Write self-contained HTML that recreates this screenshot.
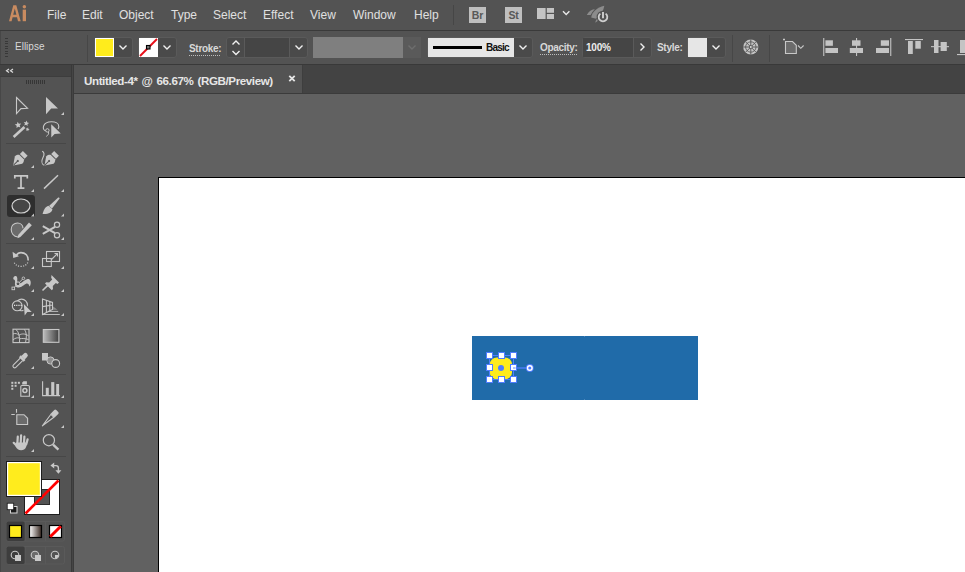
<!DOCTYPE html>
<html><head><meta charset="utf-8">
<style>
*{margin:0;padding:0;box-sizing:border-box}
html,body{width:965px;height:572px;overflow:hidden;background:#535353;font-family:"Liberation Sans",sans-serif;color:#dcdcdc}
.a{position:absolute}
.menu{font-size:12px;color:#e0e0e0;top:8px;line-height:14px}
.lbl{font-size:10px;font-weight:bold;letter-spacing:-0.3px;color:#d6d6d6;line-height:13px}
.box{position:absolute;border:1px solid #5a5a5a;border-radius:3px;background:#4a4a4a}
.dd{position:absolute;background:#474747}
svg{position:absolute;overflow:visible}
</style></head><body>
<!-- menu bar -->
<div class="a" style="left:0;top:0;width:965px;height:30px;background:#535353"></div>
<svg style="left:0;top:0" width="40" height="30"><path d="M9 21.2 L13.3 5.2 L16.3 5.2 L20.7 21.2 L18 21.2 L17 17.3 L12.6 17.3 L11.6 21.2 Z M13.2 14.8 L16.4 14.8 L14.8 8.4 Z" fill="#c98b60" fill-rule="evenodd"/><rect x="22.7" y="9.6" width="3.3" height="11.6" fill="#c98b60"/><circle cx="24.35" cy="6.8" r="1.75" fill="#c98b60"/></svg>
<div class="a menu" style="left:47px">File</div>
<div class="a menu" style="left:82px">Edit</div>
<div class="a menu" style="left:119px">Object</div>
<div class="a menu" style="left:171px">Type</div>
<div class="a menu" style="left:213px">Select</div>
<div class="a menu" style="left:263px">Effect</div>
<div class="a menu" style="left:310px">View</div>
<div class="a menu" style="left:353px">Window</div>
<div class="a menu" style="left:414px">Help</div>
<div class="a" style="left:453px;top:5px;width:1px;height:20px;background:#464646"></div>
<div class="a" style="left:469px;top:7px;width:17px;height:16px;background:#bfbfbf;color:#585858;font-size:10.5px;font-weight:bold;line-height:16px;text-align:center;letter-spacing:-0.2px">Br</div>
<div class="a" style="left:505px;top:7px;width:17px;height:16px;background:#bfbfbf;color:#585858;font-size:10.5px;font-weight:bold;line-height:16px;text-align:center;letter-spacing:-0.2px">St</div>

<!-- workspace + rocket -->
<svg style="left:0;top:0" width="620" height="30">
<rect x="537" y="8" width="8.6" height="11" fill="#c4c4c4"/>
<rect x="546.8" y="8" width="7.2" height="4.8" fill="#c4c4c4"/>
<rect x="546.8" y="14" width="7.2" height="5" fill="#c4c4c4"/>
<path d="M563 11.3 L566.2 14.6 L569.4 11.3" stroke="#e8e8e8" stroke-width="1.4" fill="none"/>
<path d="M591.2 17.6 C592 12 597 7.6 604.3 5.8 C603.6 11 600.6 15.2 596 18.8 Z" fill="#8c8c8c"/>
<path d="M586.8 14.9 C588.5 11.6 591 9.6 594.9 9 C593 11 591.6 13 590.6 15.1 Z" fill="#8c8c8c"/>
<path d="M595.4 22.7 C595.4 20.6 596.4 19 598.4 17.9 L597.6 21 Z" fill="#8c8c8c"/>
<circle cx="603" cy="17.1" r="6.4" fill="#535353"/>
<path d="M600.4 13.6 A4.3 4.3 0 1 0 605.6 13.6" stroke="#cfcfcf" stroke-width="1.8" fill="none"/>
<path d="M603 11.6 L603 18.6" stroke="#535353" stroke-width="3.4"/>
<path d="M603 11.9 L603 18.2" stroke="#cfcfcf" stroke-width="1.9"/>
</svg>
<!-- control bar -->
<div class="a" style="left:0;top:30px;width:965px;height:1px;background:#3a3a3a"></div>
<div class="a" style="left:0;top:31px;width:1px;height:33px;background:#474747"></div>
<div class="a" style="left:0;top:64px;width:965px;height:1px;background:#393939"></div>
<svg style="left:5px;top:38px" width="3" height="20" shape-rendering="crispEdges"><g fill="#383838"><rect x="0" y="0" width="3" height="1"/><rect x="0" y="3" width="3" height="1"/><rect x="0" y="5" width="3" height="1"/><rect x="0" y="8" width="3" height="1"/><rect x="0" y="10" width="3" height="1"/><rect x="0" y="13" width="3" height="1"/><rect x="0" y="15" width="3" height="1"/><rect x="0" y="18" width="3" height="1"/></g></svg>
<div class="a lbl" style="left:15px;top:40px;font-weight:normal;letter-spacing:0;color:#d8d8d8">Ellipse</div>
<div class="a" style="left:87px;top:35px;width:1px;height:27px;background:#474747"></div>
<!-- fill -->
<div class="box" style="left:94px;top:37px;width:39px;height:21px"></div>
<div class="a" style="left:95px;top:38px;width:19px;height:19px;background:#fff"></div>
<div class="a" style="left:96px;top:39px;width:17px;height:17px;background:#ffec1c"></div>
<svg style="left:119px;top:45px" width="8" height="5"><path d="M0.5 0.5 L4 4 L7.5 0.5" stroke="#f0f0f0" stroke-width="1.4" fill="none"/></svg>
<!-- stroke -->
<div class="box" style="left:138px;top:37px;width:39px;height:21px"></div>
<div class="a" style="left:139px;top:38px;width:19px;height:19px;background:#fff;overflow:hidden">
<svg style="left:0;top:0" width="19" height="19"><path d="M1 18 L18 1" stroke="#e8101a" stroke-width="1.9"/><rect x="7.5" y="7.5" width="3.5" height="3.5" fill="#777" stroke="#000" stroke-width="1.1"/></svg></div>
<svg style="left:163px;top:45px" width="8" height="5"><path d="M0.5 0.5 L4 4 L7.5 0.5" stroke="#f0f0f0" stroke-width="1.4" fill="none"/></svg>
<div class="a lbl" style="left:189px;top:42px;color:#d8d8d8">Stroke:</div>
<div class="a" style="left:189px;top:55px;width:31px;height:0;border-top:1px dotted #bdbdbd"></div>
<!-- stroke weight -->
<div class="box" style="left:226px;top:37px;width:82px;height:21px"></div>
<div class="a" style="left:244px;top:38px;width:1px;height:19px;background:#5a5a5a"></div>
<div class="a" style="left:245px;top:38px;width:44px;height:19px;background:#454545"></div>
<div class="a" style="left:289px;top:38px;width:1px;height:19px;background:#5a5a5a"></div>
<svg style="left:231.5px;top:39.5px" width="8" height="16"><path d="M0.5 4.5 L4 1 L7.5 4.5 M0.5 11 L4 14.5 L7.5 11" stroke="#f0f0f0" stroke-width="1.4" fill="none"/></svg>
<svg style="left:295px;top:45px" width="8" height="5"><path d="M0.5 0.5 L4 4 L7.5 0.5" stroke="#f0f0f0" stroke-width="1.4" fill="none"/></svg>
<!-- variable width -->
<div class="a" style="left:313px;top:37px;width:108px;height:21px;background:#5a5a5a"></div>
<div class="a" style="left:313px;top:37px;width:90px;height:21px;background:#7f7f7f"></div>
<svg style="left:408px;top:45px" width="8" height="5"><path d="M0.5 0.5 L4 4 L7.5 0.5" stroke="#6e6e6e" stroke-width="1.4" fill="none"/></svg>
<!-- brush -->
<div class="box" style="left:427px;top:37px;width:106px;height:21px"></div>
<div class="a" style="left:428px;top:38px;width:86px;height:19px;background:#e6e6e6"></div>
<div class="a" style="left:433px;top:46px;width:49px;height:3px;background:#000"></div>
<div class="a lbl" style="left:486px;top:41px;color:#111;letter-spacing:-0.8px">Basic</div>
<svg style="left:519px;top:45px" width="8" height="5"><path d="M0.5 0.5 L4 4 L7.5 0.5" stroke="#f0f0f0" stroke-width="1.4" fill="none"/></svg>
<div class="a lbl" style="left:540px;top:41px;color:#d8d8d8">Opacity:</div>
<div class="a" style="left:540px;top:54px;width:37px;height:0;border-top:1px dotted #bdbdbd"></div>
<!-- opacity -->
<div class="box" style="left:582px;top:37px;width:70px;height:21px"></div>
<div class="a" style="left:583px;top:38px;width:50px;height:19px;background:#454545"></div>
<div class="a" style="left:633px;top:38px;width:1px;height:19px;background:#5a5a5a"></div>
<div class="a lbl" style="left:586px;top:41px;color:#ededed;letter-spacing:-0.2px">100%</div>
<svg style="left:640px;top:43px" width="5" height="8"><path d="M0.5 0.5 L4 4 L0.5 7.5" stroke="#f0f0f0" stroke-width="1.4" fill="none"/></svg>
<div class="a lbl" style="left:657px;top:41px;color:#d8d8d8">Style:</div>
<div class="box" style="left:687px;top:37px;width:39px;height:21px"></div>
<div class="a" style="left:688px;top:38px;width:19px;height:19px;background:#e6e6e6"></div>
<svg style="left:712px;top:45px" width="8" height="5"><path d="M0.5 0.5 L4 4 L7.5 0.5" stroke="#f0f0f0" stroke-width="1.4" fill="none"/></svg>
<div class="a" style="left:732px;top:35px;width:1px;height:27px;background:#474747"></div>
<div class="a" style="left:769px;top:35px;width:1px;height:27px;background:#474747"></div>

<svg style="left:0;top:30px" width="965" height="34">
<!-- recolor -->
<circle cx="750.8" cy="17" r="7.6" fill="#c4c4c4"/>
<g stroke="#535353" stroke-width="0.9">
<path d="M750.8 9.4 L750.8 24.6 M743.2 17 L758.4 17 M745.4 11.6 L756.2 22.4 M756.2 11.6 L745.4 22.4"/>
</g>
<circle cx="750.8" cy="17" r="5.2" fill="none" stroke="#535353" stroke-width="0.8"/>
<circle cx="750.8" cy="17" r="1.8" fill="#535353"/>
<circle cx="750.8" cy="17" r="1" fill="#e0e0e0"/>
<!-- artboard icon -->
<path d="M783 9.5 L785 9.5 M784 8.5 L784 10.5" stroke="#c8c8c8" stroke-width="1"/>
<path d="M785.5 11.5 L792.5 11.5 L796.3 15.3 L796.3 23.5 L785.5 23.5 Z" fill="#6b6b6b" stroke="#c8c8c8" stroke-width="1.1"/>
<path d="M798 15.5 L800.8 18.3 L803.6 15.5" stroke="#c8c8c8" stroke-width="1.1" fill="none"/>
<!-- align left -->
<g fill="#c4c4c4">
<rect x="823.2" y="8" width="1.1" height="18"/>
<rect x="825.4" y="10.3" width="7.5" height="5.5"/>
<rect x="825.4" y="18" width="12.6" height="5"/>
<!-- align h center -->
<rect x="856" y="8" width="1.1" height="18"/>
<rect x="852" y="10.3" width="8.5" height="5.5"/>
<rect x="849.8" y="18" width="13.2" height="5"/>
<!-- align right -->
<rect x="890.2" y="8" width="1.1" height="18"/>
<rect x="880.8" y="10.3" width="8.2" height="5.5"/>
<rect x="876" y="18" width="13" height="5"/>
<!-- align top -->
<rect x="905" y="9" width="18" height="1.1"/>
<rect x="908" y="11" width="4.8" height="13"/>
<rect x="915.3" y="11" width="5.5" height="7.7"/>
<!-- align v center -->
<rect x="931" y="16.1" width="18" height="1.1"/>
<rect x="934" y="10" width="4.5" height="13"/>
<rect x="940.6" y="12" width="6.2" height="9"/>
<!-- align bottom -->
<rect x="957" y="24" width="8" height="1.1"/>
<rect x="960" y="10" width="5" height="13"/>
</g>
</svg>
<!-- left toolbar -->
<div class="a" style="left:0;top:65px;width:71px;height:507px;background:#535353;border-left:1px solid #474747"></div>
<div class="a" style="left:0;top:65px;width:71px;height:11px;background:#434343"></div>
<div class="a" style="left:0;top:76px;width:71px;height:1px;background:#3d3d3d"></div>
<svg style="left:5px;top:68px" width="9" height="6"><path d="M4 0.9 L1.5 2.7 L4 4.5 M8 0.9 L5.5 2.7 L8 4.5" stroke="#dcdcdc" stroke-width="1.2" fill="none"/></svg>
<svg style="left:26px;top:80px" width="19" height="4"><g fill="#363636"><rect x="0" y="0" width="1" height="4"/><rect x="2" y="0" width="1" height="4"/><rect x="4" y="0" width="1" height="4"/><rect x="6" y="0" width="1" height="4"/><rect x="8" y="0" width="1" height="4"/><rect x="10" y="0" width="1" height="4"/><rect x="12" y="0" width="1" height="4"/><rect x="14" y="0" width="1" height="4"/><rect x="16" y="0" width="1" height="4"/><rect x="18" y="0" width="1" height="4"/></g></svg>
<div class="a" style="left:71px;top:65px;width:3px;height:507px;background:#454545;border-left:1px solid #393939;border-right:1px solid #3b3b3b"></div>
<!-- separators -->
<div class="a" style="left:6px;top:143px;width:60px;height:1px;background:#474747"></div>
<div class="a" style="left:6px;top:243px;width:60px;height:1px;background:#474747"></div>
<div class="a" style="left:6px;top:321px;width:60px;height:1px;background:#474747"></div>
<div class="a" style="left:6px;top:374px;width:60px;height:1px;background:#474747"></div>
<div class="a" style="left:6px;top:403px;width:60px;height:1px;background:#474747"></div>
<div class="a" style="left:6px;top:456px;width:60px;height:1px;background:#474747"></div>
<!-- selected tool bg -->
<div class="a" style="left:7px;top:195px;width:28px;height:22px;background:#2e2e2e;border-radius:3px"></div>
<svg style="left:0;top:0" width="71" height="572">
<g fill="#c8c8c8">
<!-- sub-menu triangles -->
<path d="M61 115 L64 112 L64 115 Z"/>
<path d="M31 168 L34 165 L34 168 Z"/>
<path d="M31 192 L34 189 L34 192 Z"/><path d="M61 192 L64 189 L64 192 Z"/>
<path d="M31 216.5 L34 213.5 L34 216.5 Z"/><path d="M61 216.5 L64 213.5 L64 216.5 Z"/>
<path d="M31 240 L34 237 L34 240 Z"/><path d="M61 240 L64 237 L64 240 Z"/>
<path d="M31 269 L34 266 L34 269 Z"/><path d="M61 269 L64 266 L64 269 Z"/>
<path d="M31 292 L34 289 L34 292 Z"/><path d="M61 292 L64 289 L64 292 Z"/>
<path d="M31 316 L34 313 L34 316 Z"/><path d="M61 316 L64 313 L64 316 Z"/>
<path d="M31 369 L34 366 L34 369 Z"/>
<path d="M31 398 L34 395 L34 398 Z"/><path d="M61 398 L64 395 L64 398 Z"/>
<path d="M61 428 L64 425 L64 428 Z"/>
<path d="M31 452 L34 449 L34 452 Z"/>
</g>
<!-- selection -->
<path d="M16.5 97.5 L27.5 108.3 L21 108.6 L16.5 113.5 Z" fill="none" stroke="#c8c8c8" stroke-width="1.1"/>
<path d="M46 97 L58 108.5 L51.2 108.6 L46 114.3 Z" fill="#c8c8c8"/>
<!-- magic wand -->
<path d="M13.6 137 L24.5 127" stroke="#c8c8c8" stroke-width="2.6"/>
<path d="M17.63 121.73 L18.85 123.69 L21.16 123.61 L19.68 125.38 L20.46 127.55 L18.32 126.68 L16.50 128.10 L16.66 125.80 L14.75 124.51 L16.99 123.95 Z" fill="#c8c8c8"/>
<path d="M26.80 120.54 L27.27 122.46 L29.17 123.00 L27.49 124.03 L27.57 126.01 L26.07 124.73 L24.21 125.41 L24.96 123.59 L23.74 122.04 L25.71 122.19 Z" fill="#c8c8c8"/>
<path d="M28.04 127.37 L28.28 128.77 L29.60 129.29 L28.34 129.94 L28.25 131.36 L27.24 130.37 L25.87 130.72 L26.50 129.45 L25.74 128.26 L27.14 128.47 Z" fill="#c8c8c8"/>
<!-- lasso -->
<path d="M45.8 131 C43.6 130.2 43 128 43.6 126 C44.6 123.2 48 121.8 51.5 121.8 C55.6 121.8 58.8 123.6 58.8 126.4 C58.8 127.4 58.5 128.2 58 129" fill="none" stroke="#c8c8c8" stroke-width="1.1"/>
<circle cx="47.4" cy="130.4" r="1.7" fill="none" stroke="#c8c8c8" stroke-width="1"/>
<path d="M48.4 131.8 C49.4 133.6 47.8 135.4 46.3 136.4" fill="none" stroke="#c8c8c8" stroke-width="1"/>
<path d="M51.2 124.3 L60.8 133.4 L54.6 134 L51.3 137.6 Z" fill="#c8c8c8"/>
<!-- pen -->
<g transform="translate(13.2,165.5) rotate(45) scale(1.05)">
<path d="M0 0 L-5 -7.2 C-5 -9.6 -3.8 -10.8 -2.9 -11.4 L2.9 -11.4 C3.8 -10.8 5 -9.6 5 -7.2 Z" fill="#c8c8c8"/>
<rect x="-3.2" y="-16.2" width="6.4" height="4" fill="#c8c8c8"/>
<path d="M0 -0.8 L0 -5.6" stroke="#535353" stroke-width="0.9"/>
<circle cx="0" cy="-6.2" r="1" fill="#535353"/>
</g>
<!-- curvature pen -->
<g transform="translate(44.5,165.5) rotate(45) scale(1.05)">
<path d="M0 0 L-5 -7.2 C-5 -9.6 -3.8 -10.8 -2.9 -11.4 L2.9 -11.4 C3.8 -10.8 5 -9.6 5 -7.2 Z" fill="#c8c8c8"/>
<rect x="-3.2" y="-16.2" width="6.4" height="4" fill="#c8c8c8"/>
<path d="M0 -0.8 L0 -5.6" stroke="#535353" stroke-width="0.9"/>
<circle cx="0" cy="-6.2" r="1" fill="#535353"/>
</g>
<path d="M42.2 151.2 C44.8 152.5 44 155.5 43 157.5 C41.5 160.5 41.5 164 43.8 165.2" fill="none" stroke="#c8c8c8" stroke-width="1.1"/>
<!-- type -->
<path d="M14.8 178.6 L14.8 175.9 L27.3 175.9 L27.3 178.6 M21 176 L21 188.2 M17.6 188.2 L24.4 188.2" fill="none" stroke="#c8c8c8" stroke-width="1.7"/>
<!-- line -->
<path d="M44 188.6 L58 175.2" stroke="#c8c8c8" stroke-width="1.5"/>
<!-- ellipse -->
<ellipse cx="21" cy="206" rx="9" ry="7" fill="#464646" stroke="#d4d4d4" stroke-width="1.2"/>
<!-- paintbrush -->
<path d="M58.2 197.6 C59 197 60 198 59.4 198.8 L52 208.6 L49 206 Z" fill="#c8c8c8"/>
<path d="M48.4 205.8 L52.4 209.2 C52 212.2 48.6 214.4 42.6 214 C43.6 211 44.2 207.6 48.4 205.8 Z" fill="#c8c8c8"/>
<!-- shaper -->
<path d="M18 237 C13.5 236.5 11.2 233 11.2 229.3 C11.2 225.5 14.2 223 17.5 223 C20.8 223 23 225.3 23 228.3" fill="#6b6b6b" stroke="#c8c8c8" stroke-width="1.1"/>
<path d="M29 222.5 L31.8 225.3 L20.4 237 L17.6 238.2 L18.2 235 Z" fill="#c8c8c8"/>
<!-- scissors -->
<circle cx="57" cy="224.8" r="2.6" fill="none" stroke="#c8c8c8" stroke-width="1.2"/>
<circle cx="57" cy="235.2" r="2.6" fill="none" stroke="#c8c8c8" stroke-width="1.2"/>
<path d="M42.8 226.2 L55 233.2 M42.8 233.8 L55 226.8" stroke="#c8c8c8" stroke-width="2"/>
<!-- rotate -->
<path d="M16.5 255.2 C17.5 253.4 19 252.6 21 252.6 C25 252.6 28.2 255.4 28.2 260.6" fill="none" stroke="#c8c8c8" stroke-width="1.7"/>
<path d="M27.8 262.5 C26.5 265 24 266.4 21 266.4 C17.6 266.4 14.8 264.6 13.8 261.6" fill="none" stroke="#c8c8c8" stroke-width="1.2" stroke-dasharray="1.1 1.4"/>
<path d="M12.6 251.8 L19 256.2 L13.2 258 Z" fill="#c8c8c8"/>
<!-- scale -->
<rect x="46.5" y="251.5" width="13" height="10" fill="none" stroke="#c8c8c8" stroke-width="1.1"/>
<rect x="42.5" y="258.5" width="8.8" height="8" fill="none" stroke="#c8c8c8" stroke-width="1.1"/>
<path d="M51 260 L57.5 253.5 M54.5 253.5 L57.5 253.5 L57.5 256.5" fill="none" stroke="#c8c8c8" stroke-width="1.1"/>
<!-- puppet warp -->
<path d="M13.4 279.2 C12.8 277.2 14.4 275.6 16 276 C17.6 276.6 17.4 279 17.2 281 C17 283 19 284 21 283 C23 282 25 279.4 27.6 279 C30.2 278.6 31.2 281.6 30.6 284 C30.3 285.4 29.9 286.4 29.5 286.6 C29 284.6 28 283.2 26.5 283.6 C24 284.5 22 287.6 18.6 287.6 C15.6 287.6 14.6 285 15 283 C15.4 281 15 279.6 13.4 279.2 Z" fill="#c8c8c8"/>
<path d="M13.3 288.4 L18 283.8 L23.4 278.3" stroke="#c8c8c8" stroke-width="0.9" fill="none"/>
<circle cx="18" cy="283.8" r="1.9" fill="#535353" stroke="#c8c8c8" stroke-width="1"/>
<rect x="12" y="287.1" width="2.6" height="2.6" fill="#535353" stroke="#c8c8c8" stroke-width="0.9"/>
<circle cx="23.4" cy="278.3" r="1.3" fill="#535353" stroke="#c8c8c8" stroke-width="0.9"/>
<!-- pin -->
<path d="M51.5 275 L59 282.5 L57.5 284 L55.8 283 L52.8 286 L53 289 L51.8 290.2 L45 283.4 L46.2 282.2 L49.2 282.4 L52.2 279.4 L51.2 277.7 Z" fill="#c8c8c8"/>
<path d="M42.5 290.5 L47.8 285.4" stroke="#c8c8c8" stroke-width="1.6"/>
<!-- shape builder -->
<circle cx="21.6" cy="304.9" r="5.8" fill="none" stroke="#c8c8c8" stroke-width="1.1"/>
<circle cx="17.2" cy="305.8" r="4.9" fill="#535353" stroke="#c8c8c8" stroke-width="1.1"/>
<path d="M14 305.4 L23.5 305.4" stroke="#e6e6e6" stroke-width="1.2" stroke-dasharray="1.2 1"/>
<path d="M23.6 306.2 L27.5 308.8 L23.8 304" fill="#535353"/>
<path d="M23.6 303.6 L32 311.8 L27.4 312 L24.8 315.6 Z" fill="#535353" stroke="#535353" stroke-width="1.6"/>
<path d="M23.8 304 L31.7 312 L27.3 312 L24.7 315.5 Z" fill="#c8c8c8"/>
<!-- perspective grid -->
<path d="M52.5 306 L57.5 309.8 L52.5 309.8 Z" fill="#8a8a8a"/>
<path d="M42.5 299 L52.5 302.4 L52.5 309.4 L42.5 314.6 Z M46.4 300.4 L46.4 312.6 M49.8 301.6 L49.8 310.8 M42.5 306.6 L52.5 305" fill="none" stroke="#c8c8c8" stroke-width="1.1"/>
<path d="M48 311.4 L58.2 311.4 M42.5 314.5 L59.8 314.5" stroke="#c8c8c8" stroke-width="0.9"/>
<!-- mesh -->
<rect x="13" y="329.2" width="16" height="13.4" fill="none" stroke="#c8c8c8" stroke-width="1.1"/>
<path d="M16 329.5 C19 332 20 337 19.5 342.5 M13 334 C15 333 17.5 333.5 19.2 335.5 M13 340 C15 338 17 337.5 19.5 338 M19.2 335 C22 333.5 25 333.5 28.5 335.8 M19.6 338.8 C22 338.2 25.5 338.5 28.5 339.5 M24.5 329.5 C26.5 332 27 337 25.5 342.5" fill="none" stroke="#c8c8c8" stroke-width="0.95"/>
<!-- gradient -->
<defs><linearGradient id="gr" x1="0" x2="1"><stop offset="0" stop-color="#bdbdbd"/><stop offset="1" stop-color="#3f3f3f"/></linearGradient>
<linearGradient id="gr2" x1="0" x2="1"><stop offset="0" stop-color="#ffffff"/><stop offset="1" stop-color="#35261f"/></linearGradient></defs>
<rect x="43.3" y="329.5" width="15.6" height="12.8" fill="url(#gr)" stroke="#c8c8c8" stroke-width="1.1"/>
<!-- eyedropper -->
<g transform="translate(13.8,367) rotate(45)">
<path d="M-1.7 -10.8 L-1.7 -1.2 A1.7 1.7 0 0 0 1.7 -1.2 L1.7 -10.8" fill="none" stroke="#c8c8c8" stroke-width="1.1"/>
<rect x="-3.3" y="-13.2" width="6.6" height="2.6" fill="#c8c8c8"/>
<path d="M-2.4 -13 L-2.4 -16.4 A2.4 2.4 0 0 1 2.4 -16.4 L2.4 -13 Z" fill="#c8c8c8"/>
</g>
<!-- blend -->
<rect x="42" y="353" width="6" height="7.5" fill="#c8c8c8"/>
<circle cx="50.5" cy="360.5" r="3.6" fill="#8d8d8d" stroke="#c8c8c8" stroke-width="1"/>
<circle cx="55.7" cy="363.5" r="3.9" fill="#535353" stroke="#c8c8c8" stroke-width="1.1"/>
<!-- symbol sprayer -->
<g fill="#c8c8c8"><rect x="11.3" y="381.8" width="2" height="2"/><rect x="14.6" y="381.8" width="2" height="2"/><rect x="17.9" y="381.8" width="2" height="2"/><rect x="11.3" y="384.8" width="2" height="2"/><rect x="14.6" y="384.8" width="2" height="2"/><rect x="11.3" y="387.8" width="2" height="2"/></g>
<path d="M22.2 384.5 L22.2 382.6 L23.5 381.2 L26.9 381.2 L26.9 384.5 Z" fill="#c8c8c8"/>
<path d="M20.8 396.2 L20.8 386.6 Q20.8 385.5 21.9 385.5 L28.3 385.5 Q29.4 385.5 29.4 386.6 L29.4 396.2 Z" fill="none" stroke="#c8c8c8" stroke-width="1.1"/>
<circle cx="24.9" cy="390.6" r="2" fill="none" stroke="#c8c8c8" stroke-width="1.5"/>
<!-- graph -->
<path d="M42.6 381.2 L42.6 395.6 L60 395.6" fill="none" stroke="#c8c8c8" stroke-width="1.1"/>
<rect x="45.8" y="387.8" width="3" height="7.5" fill="#c8c8c8"/>
<rect x="51.2" y="382.1" width="3.1" height="13.2" fill="#c8c8c8"/>
<rect x="56.2" y="384" width="2.9" height="11.3" fill="#c8c8c8"/>
<!-- artboard -->
<path d="M16.5 409 L16.5 412.8 M11.3 414.5 L14.8 414.5" stroke="#c8c8c8" stroke-width="1.1"/>
<path d="M16.8 414.7 L24 414.7 L27.6 418.3 L27.6 424.5 L16.8 424.5 Z" fill="#6b6b6b" stroke="#c8c8c8" stroke-width="1.1"/>
<!-- slice -->
<g transform="translate(42.4,425.8) rotate(45)">
<path d="M0 0 L-2.1 -14.2 L2.1 -14.2 Z" fill="none" stroke="#c8c8c8" stroke-width="1.1" stroke-linejoin="round"/>
<path d="M-2.8 -14.4 L-2.8 -19.6 Q-2.8 -21 -1.4 -21 L1.4 -21 Q2.8 -21 2.8 -19.6 L2.8 -14.4 Z" fill="#c8c8c8"/>
</g>
<!-- hand -->
<path d="M15.8 442.5 L27.2 442.5 L26.2 446.8 C25.2 449.4 23.2 450.2 21.2 450.2 C18.6 450.2 16.6 448.6 15.6 446.2 Z" fill="#c8c8c8"/>
<path d="M17.3 444 L17.8 436.6 M20.7 443 L21.1 435.3 M24 443 L24.4 436.6 M26.2 444.5 L27.6 439.4 M17.4 446.6 L13.7 442.8" stroke="#c8c8c8" stroke-width="2.2" stroke-linecap="round"/>
<!-- zoom -->
<circle cx="48.9" cy="440.2" r="5.6" fill="none" stroke="#c8c8c8" stroke-width="1.2"/>
<path d="M53.1 444.6 L58.4 449.6" stroke="#c8c8c8" stroke-width="2.4"/>
<!-- fill/stroke swatches -->
<rect x="24.5" y="479.5" width="35" height="35" fill="#fff" stroke="#1e1e1e" stroke-width="1"/>
<rect x="34.5" y="489.5" width="15" height="15" fill="#535353" stroke="#2a2a2a" stroke-width="1"/>
<path d="M25.5 513.5 L58.5 480.5" stroke="#f00" stroke-width="2.6"/>
<rect x="6.5" y="461.5" width="35" height="35" fill="#fff" stroke="#1e1e1e" stroke-width="1"/>
<rect x="8.2" y="463.2" width="31.6" height="31.6" fill="#ffec1d"/>
<!-- swap -->
<path d="M53 465.6 L56 465.6 Q58.4 465.6 58.4 468 L58.4 471" fill="none" stroke="#c8c8c8" stroke-width="1.4"/>
<path d="M50.4 465.6 L54.2 462.6 L54.2 468.6 Z M58.4 473.8 L55.4 470.2 L61.4 470.2 Z" fill="#c8c8c8"/>
<!-- default -->
<rect x="10.5" y="506.5" width="6.5" height="6.5" fill="#1a1a1a" stroke="#d8d8d8" stroke-width="1"/>
<rect x="7.2" y="503.2" width="6.5" height="6.5" fill="#fff" stroke="#1a1a1a" stroke-width="0.8"/>
<!-- color mode group -->
<rect x="6.5" y="521.5" width="58" height="19.6" rx="2" fill="none" stroke="#5a5a5a" stroke-width="1"/>
<rect x="6.5" y="521.5" width="18.5" height="19.6" rx="2" fill="#3d3d3d"/>
<path d="M25.2 522 L25.2 541 M45.4 522 L45.4 541" stroke="#5a5a5a" stroke-width="1"/>
<rect x="9.5" y="525.5" width="12" height="12" fill="#ffec1d" stroke="#000" stroke-width="1.2"/>
<rect x="29.5" y="525.5" width="12" height="12" fill="url(#gr2)" stroke="#000" stroke-width="1.2"/>
<rect x="49.5" y="525.5" width="12" height="12" fill="#fff" stroke="#000" stroke-width="1.2"/>
<path d="M50.2 536.8 L60.8 526.2" stroke="#f00" stroke-width="3"/>
<!-- draw mode group -->
<rect x="6.5" y="546.5" width="58" height="17.5" rx="2" fill="none" stroke="#5a5a5a" stroke-width="1"/>
<rect x="6.5" y="546.5" width="18.5" height="17.5" rx="2" fill="#3d3d3d"/>
<path d="M25.2 547 L25.2 564 M45.4 547 L45.4 564" stroke="#5a5a5a" stroke-width="1"/>
<circle cx="15" cy="555" r="3.8" fill="none" stroke="#c8c8c8" stroke-width="1.1"/>
<rect x="15" y="555" width="6" height="6" fill="#c8c8c8"/>
<circle cx="35" cy="555" r="3.8" fill="#6b6b6b" stroke="#c8c8c8" stroke-width="1.1"/>
<rect x="35" y="555" width="6" height="6" fill="#c8c8c8"/>
<circle cx="55" cy="555" r="3.8" fill="none" stroke="#c8c8c8" stroke-width="1.1"/>
<path d="M55 555 L58.5 555 A3.5 3.5 0 0 1 55 558.5 Z" fill="#c8c8c8"/>
</svg>
<!-- tab bar -->
<div class="a" style="left:74px;top:65px;width:891px;height:28px;background:#434343"></div>
<div class="a" style="left:74px;top:65px;width:229px;height:28px;background:#535353;border-right:1px solid #3e3e3e"></div>
<div class="a" style="left:84px;top:74px;font-size:11.6px;font-weight:bold;letter-spacing:-0.4px;word-spacing:1.2px;color:#e6e6e6;line-height:14px">Untitled-4* @ 66.67% (RGB/Preview)</div>
<svg style="left:0;top:0" width="310" height="93"><path d="M289.3 75.8 L294.7 81.2 M294.7 75.8 L289.3 81.2" stroke="#e6e6e6" stroke-width="1.8"/></svg>
<div class="a" style="left:74px;top:93px;width:891px;height:1px;background:#3b3b3b"></div>
<!-- canvas -->
<div class="a" style="left:74px;top:94px;width:891px;height:478px;background:#616161"></div>
<div class="a" style="left:158px;top:177px;width:807px;height:395px;background:#fff;border-left:1px solid #000;border-top:1px solid #000"></div>
<div class="a" style="left:472px;top:336px;width:226px;height:64px;background:#206ba9"></div>
<div class="a" style="left:584px;top:336px;width:1px;height:1px;background:#4c87bb"></div>
<div class="a" style="left:584px;top:399px;width:1px;height:1px;background:#4c87bb"></div>
<svg style="left:0;top:0" width="965" height="572">
<rect x="489.8" y="357.4" width="22.2" height="22" rx="7" fill="#ffec1c"/>
<rect x="489.5" y="355.5" width="24" height="24" fill="none" stroke="#4f7dff" stroke-width="1"/>
<path d="M516.5 368 L527 368" stroke="#4f7dff" stroke-width="1.3"/>
<circle cx="501" cy="368" r="3" fill="#4f7dff"/>
<g fill="#fff" stroke="#4f7dff" stroke-width="1">
<rect x="486.5" y="352.5" width="6" height="6"/><rect x="498.5" y="352.5" width="6" height="6"/><rect x="510.5" y="352.5" width="6" height="6"/>
<rect x="486.5" y="364.5" width="6" height="6"/><rect x="510.5" y="364.5" width="6" height="6"/>
<rect x="486.5" y="376.5" width="6" height="6"/><rect x="498.5" y="376.5" width="6" height="6"/><rect x="510.5" y="376.5" width="6" height="6"/>
</g>
<circle cx="529.8" cy="368" r="3.9" fill="#4f7dff"/>
<circle cx="529.8" cy="368" r="2.3" fill="none" stroke="#fff" stroke-width="1.5"/>
<circle cx="529.8" cy="368" r="1" fill="#4f7dff"/>
<rect x="513" y="367.1" width="2.6" height="1.8" fill="#a9bdff"/>
</svg>
</body></html>
